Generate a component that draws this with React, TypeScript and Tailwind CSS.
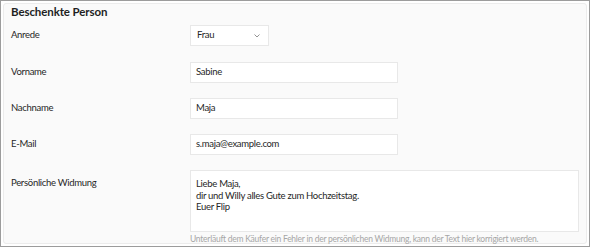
export default function App() {
  const rows = [
    { label: 'Vorname', value: 'Sabine', mt: 'mt-[16px]' },
    { label: 'Nachname', value: 'Maja', mt: 'mt-[15px]' },
    { label: 'E-Mail', value: 's.maja@example.com', mt: 'mt-[15px]' },
  ]

  return (
    <div className="w-[590px] h-[248px] bg-white font-['Lato',sans-serif] text-[#262626]">
      <div className="h-[247px] border border-[#9c9c9c] p-[2px]">
        <div className="h-full rounded-[3px] border border-[#ececec] bg-[#fafafa] px-[7px] pt-[1px]">
          <h2 className="text-[11.5px] font-bold text-[#1f1f1f] leading-[14px] tracking-[-0.1px]">Beschenkte Person</h2>

          <div className="mt-[6px] flex items-center h-[21px]">
            <span className="w-[179px] shrink-0 text-[9.5px] tracking-[-0.3px]">Anrede</span>
            <div className="w-[79px] h-[21px] bg-white border border-[#e8e8e8] flex items-center justify-between pl-[6px] pr-[8px]">
              <span className="text-[9.5px] tracking-[-0.3px]">Frau</span>
              <svg width="6" height="4" viewBox="0 0 6 4" fill="none">
                <path d="M0.5 0.5l2.5 2.5 2.5-2.5" stroke="#888" strokeWidth="0.9" />
              </svg>
            </div>
          </div>

          {rows.map((r) => (
            <div key={r.label} className={`${r.mt} flex items-center h-[21px]`}>
              <span className="w-[179px] shrink-0 text-[9.5px] tracking-[-0.3px]">{r.label}</span>
              <div className="w-[208px] h-[21px] bg-white border border-[#e8e8e8] flex items-center px-[5px]">
                <span className="text-[9.5px] tracking-[-0.3px]">{r.value}</span>
              </div>
            </div>
          ))}

          <div className="mt-[15px] flex">
            <span className="w-[179px] shrink-0 pt-[7px] text-[9.5px] leading-[11.5px] tracking-[-0.3px]">Persönliche Widmung</span>
            <div className="w-[389px] shrink-0">
              <div className="h-[62px] bg-white border border-[#e8e8e8] px-[5px] pt-[7px] text-[9.5px] leading-[11.5px] tracking-[-0.3px]">
                Liebe Maja,
                <br />
                dir und Willy alles Gute zum Hochzeitstag.
                <br />
                Euer Flip
              </div>
              <p className="mt-[2px] whitespace-nowrap text-[8.5px] leading-[11px] tracking-[-0.25px] text-[#a6a6a6]">
                Unterläuft dem Käufer ein Fehler in der persönlichen Widmung, kann der Text hier korrigiert werden.
              </p>
            </div>
          </div>
        </div>
      </div>
    </div>
  )
}
